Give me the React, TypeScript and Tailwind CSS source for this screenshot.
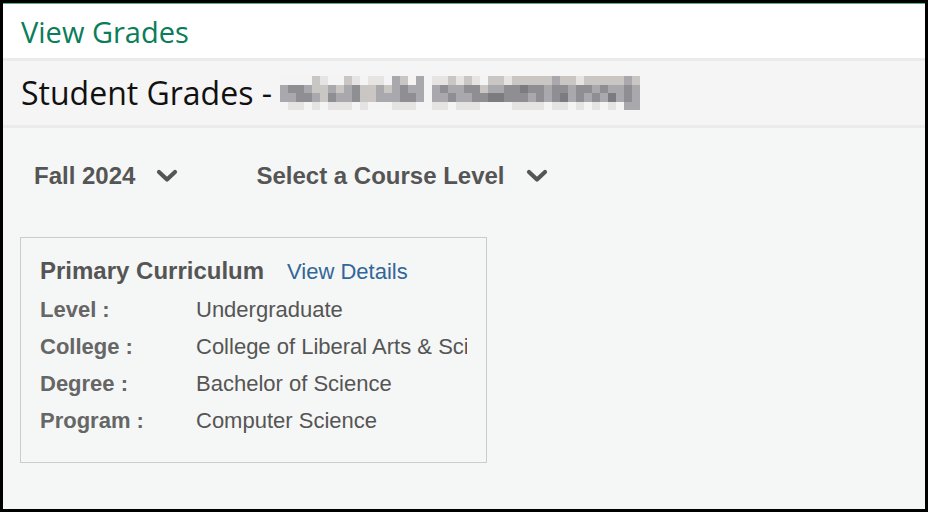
// Student grades view: header, term / level pickers and curriculum card
import React from 'react';

const blurShades = [
  'bg-[#f4f4f4]',
  'bg-[#e6e4e2]',
  'bg-[#c9c6c4]',
  'bg-[#a9a9ad]',
  'bg-[#8f8f93]',
  'bg-[#7b7b80]',
];

// each digit is an index into blurShades, one row per string
const blurRows = [
  '000021002101103203011212102212222232212222232',
  '344322323422323433034334423344544344344343343',
  '334432433422333443033433445544434345343435343',
  '011010111010001110011011100001111011010101033',
];

function BlurredName() {
  return (
    <div className="ml-2 flex flex-col">
      {blurRows.map((row, r) => (
        <div key={r} className="flex">
          {row.split('').map((c, i) => (
            <div key={i} className={`h-[8.5px] w-[8px] ${blurShades[Number(c)]}`} />
          ))}
        </div>
      ))}
    </div>
  );
}

function Chevron() {
  return (
    <svg width="22" height="14" viewBox="0 0 22 14" className="shrink-0">
      <polyline
        points="3,3 11,10.5 19,3"
        fill="none"
        stroke="#555555"
        strokeWidth="4.2"
        strokeLinecap="round"
        strokeLinejoin="round"
      />
    </svg>
  );
}

function Picker({ label }: { label: string }) {
  return (
    <button type="button" className="flex items-center gap-[21px] text-[24px] font-bold text-[#555555]">
      <span>{label}</span>
      <Chevron />
    </button>
  );
}

const rows = [
  { label: 'Level :', value: 'Undergraduate' },
  { label: 'College :', value: 'College of Liberal Arts & Sciences' },
  { label: 'Degree :', value: 'Bachelor of Science' },
  { label: 'Program :', value: 'Computer Science' },
];

export default function App() {
  return (
    <div className="flex h-[512px] w-[928px] flex-col border-[3px] border-black bg-[#f5f7f6]">
      <div className="border-t border-[#4fb488] bg-white px-[18px] pb-[9px] pt-[10px]">
        <h1 className="font-['Open_Sans',sans-serif] text-[29px] leading-[35px] text-[#0a7d5a]">View Grades</h1>
      </div>
      <div className="flex h-[70px] items-center border-y-[3px] border-[#ebebeb] bg-[#f5f5f5] px-[18px]">
        <h2 className="font-['Open_Sans',sans-serif] text-[32px] text-[#111111]">Student Grades -</h2>
        <BlurredName />
      </div>

      <div className="flex flex-col px-[17px] font-['Liberation_Sans',Arial,sans-serif]">
        <div className="flex items-center gap-[78px] pl-[14px] pt-[30px]">
          <Picker label="Fall 2024" />
          <Picker label="Select a Course Level" />
        </div>

        <div className="mt-[43px] h-[226px] w-[467px] border border-[#cccccc] px-[19px] pt-[15px]">
          <div className="flex items-baseline gap-[23px]">
            <span className="text-[24px] font-bold text-[#555555]">Primary Curriculum</span>
            <a href="#" className="text-[22px] text-[#336699]">View Details</a>
          </div>
          <div className="mt-[2px] flex flex-col">
            {rows.map((r) => (
              <div key={r.label} className="flex h-[37px] items-center text-[22px]">
                <span className="w-[156px] shrink-0 font-bold text-[#666666]">{r.label}</span>
                <span className="overflow-hidden whitespace-nowrap text-[#555555]">{r.value}</span>
              </div>
            ))}
          </div>
        </div>
      </div>
    </div>
  );
}
